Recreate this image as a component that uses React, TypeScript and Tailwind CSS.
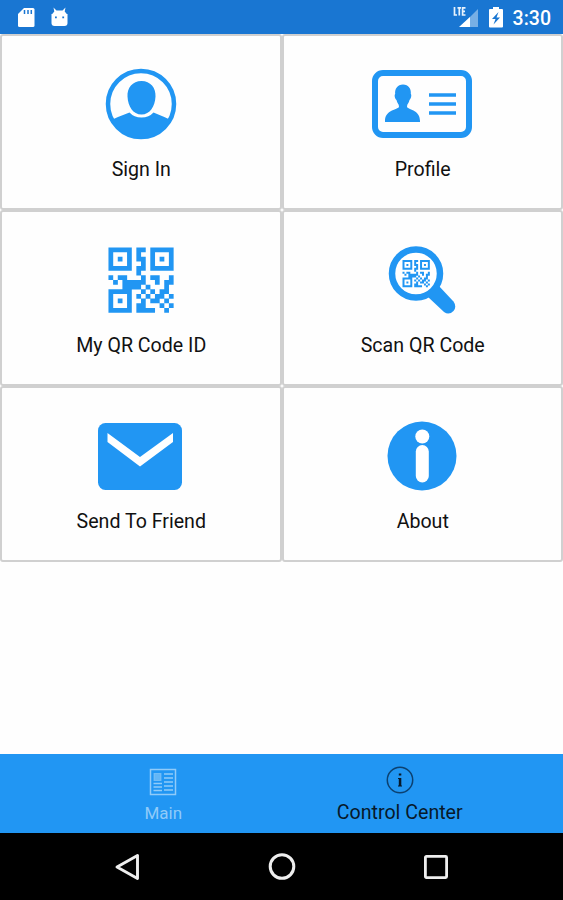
import type { ReactNode } from 'react';

const BLUE = '#2196f3';

const QR_ROWS = [
  '#####.##.#####',
  '#...#.#..#...#',
  '#.#.#.##.#.#.#',
  '#...#..#.#...#',
  '#####.##.#####',
  '......#.......',
  '#.##...#.##..#',
  '.#.#####..#.##',
  '...####.#...#.',
  '#####..#.#.##.',
  '#...#.#.#.##.#',
  '#.#.#..#.##.#.',
  '#...#.##...#.#',
  '#####.####..#.',
];

const QR_PATH = QR_ROWS.flatMap((row, y) =>
  row.split('').map((c, x) => (c === '#' ? `M${x} ${y}h1.02v1.02h-1.02z` : '')),
).join('');

const SignInIcon = (
  <svg width="72" height="72" viewBox="0 0 72 72">
    <defs>
      <clipPath id="user-disc">
        <circle cx="36" cy="36" r="34" />
      </clipPath>
    </defs>
    <circle cx="36" cy="36" r="33" fill="none" stroke={BLUE} strokeWidth="4.5" />
    <g clipPath="url(#user-disc)" fill={BLUE}>
      <path d="M0 55Q12 49 24.500 44.500Q29 49.500 36.500 49.500Q44 49.500 48.500 44.500Q60 49 72 55V72H0Z" />
      <path d="M36.500 13C45.500 13 51 20 50.500 28.500C50 38.500 45 46.500 36.500 46.500C28 46.500 23 38.500 22.500 28.500C22 20 27.500 13 36.500 13Z" />
    </g>
  </svg>
);

const ProfileIcon = (
  <svg width="100" height="68" viewBox="0 0 100 68">
    <rect x="3" y="3" width="94" height="62" rx="8" fill="none" stroke={BLUE} strokeWidth="6" />
    <path
      fill={BLUE}
      d="M31 14.500C36.500 14.500 39.500 19 38.800 24C40 25 38.800 29 37.500 30C37 33 35 34 35 36.500C35 40 48 39 48 51V52H13V51C13 39 27 40 27 36.500C27 34 25 33 24.500 30C23 29 22 25 23.200 24C22.500 19 25.500 14.500 31 14.500Z"
    />
    <path d="M57 25H84M57 34H84M57 43H84" stroke={BLUE} strokeWidth="3.500" />
  </svg>
);

const QrIcon = (
  <svg width="66" height="66" viewBox="-.1 -.1 14.2 14.2">
    <path d={QR_PATH} fill={BLUE} />
  </svg>
);

const ScanIcon = (
  <svg width="68" height="68" viewBox="0 0 68 68">
    <path fill={BLUE} d="M39 50L50 39L65.500 55.500Q69 60.500 65.500 65Q61 69.500 56 66Z" />
    <circle cx="28" cy="27.500" r="24" fill="#fff" stroke={BLUE} strokeWidth="6.500" />
    <path d={QR_PATH} fill={BLUE} transform="translate(14.5 14) scale(1.95)" />
  </svg>
);

const MailIcon = (
  <svg className="-ml-0.5" width="84" height="67" viewBox="0 0 84 67">
    <rect width="84" height="67" rx="7.500" fill={BLUE} />
    <path fill="#fff" d="M9.500 10L42 34L75 10V19L42 43.500L9.500 19Z" />
  </svg>
);

const AboutIcon = (
  <svg width="70" height="70" viewBox="0 0 70 70">
    <circle cx="35" cy="35" r="34.500" fill={BLUE} />
    <circle cx="35.300" cy="15.500" r="7" fill="#fff" />
    <rect x="28.800" y="24" width="13" height="37.500" rx="6.500" fill="#fff" />
  </svg>
);

function Tile({ icon, label }: { icon: ReactNode; label: string }) {
  return (
    <button className="flex h-44 flex-col items-center rounded-[3px] border-2 border-[#d0d0d0] bg-[#fefefe] pt-8">
      <span className="flex h-[72px] items-center justify-center">{icon}</span>
      <span className="mt-[17px] pl-px text-[19.6px] leading-[26px] whitespace-nowrap">{label}</span>
    </button>
  );
}

function StatusBar() {
  return (
    <header className="flex h-[34px] shrink-0 items-center bg-[#1976d2] text-white">
      <svg className="ml-[18px]" width="17" height="21" viewBox="0 0 17 21">
        <path fill="#fff" d="M6 1H15Q16.500 1 16.500 2.500V18.500Q16.500 20 15 20H1.500Q0 20 0 18.500V7Z" />
        <path d="M6.500 3V7M10 3V7M13.300 3V7" stroke="#1976d2" strokeWidth="1.500" />
      </svg>
      <svg className="ml-4" width="17" height="21" viewBox="0 0 17 21">
        <path fill="#fff" d="M.5 7H16.500V16Q16.500 19 13.500 19H3.500Q.5 19 .5 16Z" />
        <path fill="#fff" d="M.8 7.500L3.300 4.500L2.500 .5L5.500 3.500H11.500L14.500 .5L13.700 4.500L16.200 7.500Z" />
        <path fill="#1976d2" d="M4 9.500H5.800V11.300H4ZM11.300 9.500H13.100V11.300H11.300Z" />
      </svg>
      <div className="ml-auto flex items-center pr-3">
        <svg width="26" height="22" viewBox="0 0 26 22">
          <path d="M25 3V21H7Z" fill="#77afe5" />
          <path d="M17 11V21H6Z" fill="#fff" />
          <path
            d="M1.500 1V9H4M4.500 1.900H8M6.300 2V9.500M12.500 1.900H9.600V9H12.500M9.600 5.400H12"
            fill="none"
            stroke="#e8f2fc"
            strokeWidth="1.700"
          />
        </svg>
        <svg className="ml-[10px]" width="14" height="21" viewBox="0 0 14 21">
          <path fill="#fff" d="M4 0H10V2H13Q14 2 14 3V19.500Q14 20.500 13 20.500H1Q0 20.500 0 19.500V3Q0 2 1 2H4Z" />
          <path fill="#1976d2" d="M9.500 5L3 12H6.500L4.500 17.500L11 10.500H7.500Z" />
        </svg>
        <span className="mt-[3px] ml-[10px] text-[19.5px] leading-[31px] font-medium">3:30</span>
      </div>
    </header>
  );
}

export default function App() {
  return (
    <div className="flex h-[900px] w-[563px] flex-col overflow-hidden bg-[#fefefe] font-['Roboto',sans-serif] text-[#111]">
      <StatusBar />
      <main className="grid grid-cols-2">
        <Tile icon={SignInIcon} label="Sign In" />
        <Tile icon={ProfileIcon} label="Profile" />
        <Tile icon={QrIcon} label="My QR Code ID" />
        <Tile icon={ScanIcon} label="Scan QR Code" />
        <Tile icon={MailIcon} label="Send To Friend" />
        <Tile icon={AboutIcon} label="About" />
      </main>
      <nav className="mt-auto flex h-[79px] shrink-0 bg-[#2196f3] px-[45px]">
        <button className="flex flex-1 flex-col items-center pt-[14px] text-[#90cbf9]">
          <svg width="28" height="28" viewBox="0 0 28 28" fill="none" stroke="currentColor">
            <rect x="1.500" y="1.500" width="25" height="25" strokeWidth="1.500" />
            <rect x="5" y="5.500" width="7" height="7" fill="currentColor" fillOpacity=".6" strokeOpacity=".6" />
            <path
              d="M15 6H24M15 10H24M15 14H24M15 18H24M15 22H24M4.500 15.500H13M4.500 19H13M4.500 22.500H13"
              strokeWidth="1.500"
            />
          </svg>
          <span className="mt-1 text-[17px] leading-[26px]">Main</span>
        </button>
        <button className="flex flex-1 flex-col items-center pt-3 text-[#07192a]">
          <svg width="28" height="28" viewBox="0 0 28 28">
            <circle cx="14" cy="14" r="12.700" fill="none" stroke="#0c4170" strokeWidth="1.500" />
            <path d="M12.800 7.500H15.300V9.500H12.800ZM12 12H15.300V19.500H16V20.500H12V19.500H12.800V13H12Z" fill="#07192a" />
          </svg>
          <span className="mt-1.5 text-[19.6px] leading-[26px] whitespace-nowrap">Control Center</span>
        </button>
      </nav>
      <footer className="flex h-[67px] shrink-0 items-center justify-between bg-black pr-[114px] pl-[114px]">
        <svg width="26" height="28" viewBox="0 0 26 28">
          <path d="M23.500 2.500V25.500L3 14Z" fill="none" stroke="#eee" strokeWidth="2.900" strokeLinejoin="round" />
        </svg>
        <svg width="28" height="28" viewBox="0 0 28 28">
          <circle cx="14" cy="13.500" r="11.800" fill="none" stroke="#eee" strokeWidth="3" />
        </svg>
        <svg width="26" height="26" viewBox="0 0 26 26">
          <rect x="2.400" y="2.400" width="21.200" height="21.200" rx="1" fill="none" stroke="#eee" strokeWidth="2.800" />
        </svg>
      </footer>
    </div>
  );
}
